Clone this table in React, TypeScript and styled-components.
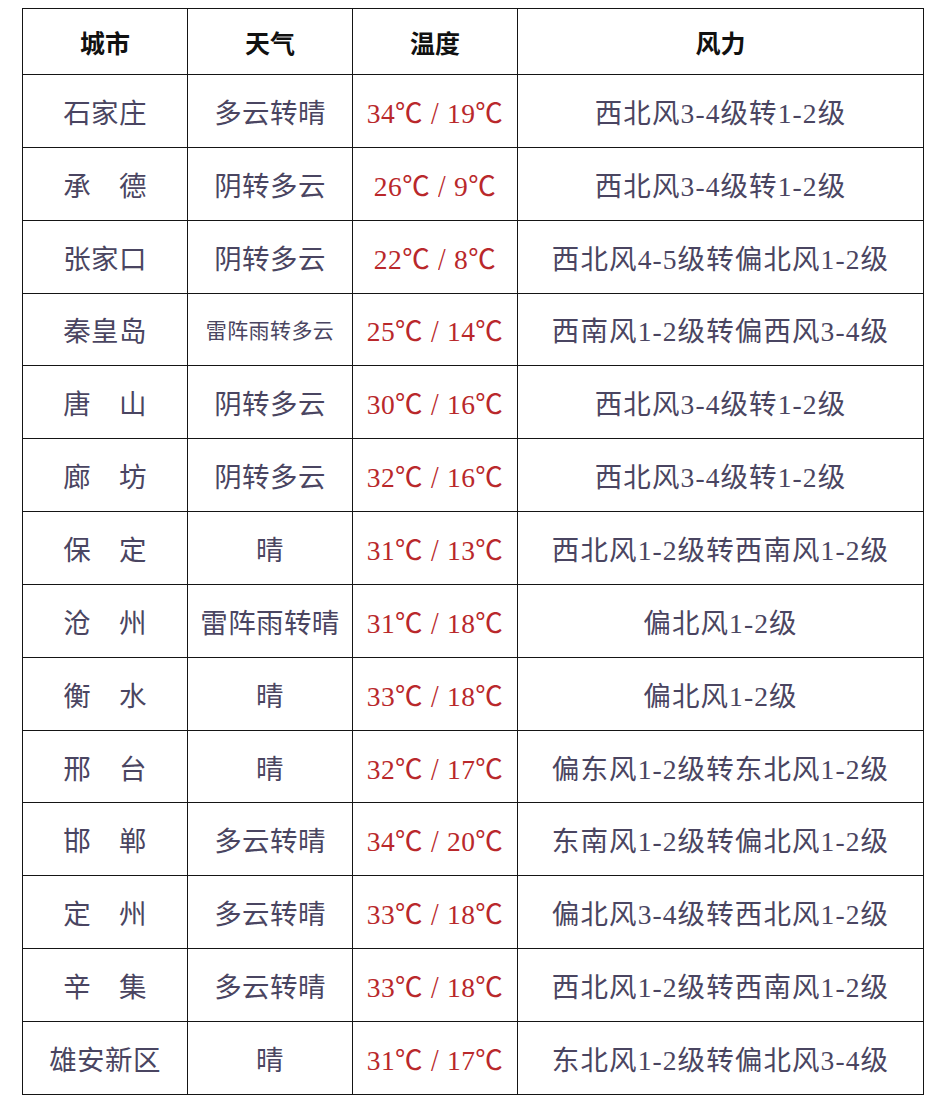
import React from "react";
import styled, { createGlobalStyle } from "styled-components";

const Global = createGlobalStyle`
  html, body { margin: 0; padding: 0; background: #ffffff; }
  body { font-family: "Liberation Serif", "Noto Sans CJK SC", serif; }
`;

const Page = styled.div`
  padding: 8px 0 0 22px;
`;

const Table = styled.table`
  border-collapse: collapse;
  table-layout: fixed;
  width: 901px;
  border: 1.5px solid #151515;
`;

const Col = styled.col<{ $w: number }>`
  width: ${(p) => p.$w}px;
`;

const HeadCell = styled.th`
  height: 65px;
  border: 1.5px solid #151515;
  padding: 0;
  text-align: center;
  vertical-align: middle;
  font-family: "Noto Sans CJK SC", sans-serif;
  font-weight: 700;
  font-size: 25px;
  color: #111111;
`;

const Cell = styled.td<{ $tone?: "red" | "plain"; $small?: boolean; $wide?: boolean }>`
  height: 71.85px;
  border: 1.5px solid #151515;
  padding: 0;
  text-align: center;
  vertical-align: middle;
  white-space: nowrap;
  font-family: "Liberation Serif", "Noto Sans CJK SC", serif;
  font-size: ${(p) => (p.$small ? "21px" : "27.5px")};
  color: ${(p) => (p.$tone === "red" ? "#b9282b" : "#4a4561")};
  letter-spacing: ${(p) => (p.$wide ? "1.1px" : "0.4px")};
`;

const Slash = styled.span`
  display: inline-block;
  margin: 0 8px;
  transform: scaleY(1.12);
`;

type Row = { city: string; weather: string; hi: string; lo: string; wind: string };

const rows: Row[] = [
  { city: "石家庄", weather: "多云转晴", hi: "34", lo: "19", wind: "西北风3-4级转1-2级" },
  { city: "承　德", weather: "阴转多云", hi: "26", lo: "9", wind: "西北风3-4级转1-2级" },
  { city: "张家口", weather: "阴转多云", hi: "22", lo: "8", wind: "西北风4-5级转偏北风1-2级" },
  { city: "秦皇岛", weather: "雷阵雨转多云", hi: "25", lo: "14", wind: "西南风1-2级转偏西风3-4级" },
  { city: "唐　山", weather: "阴转多云", hi: "30", lo: "16", wind: "西北风3-4级转1-2级" },
  { city: "廊　坊", weather: "阴转多云", hi: "32", lo: "16", wind: "西北风3-4级转1-2级" },
  { city: "保　定", weather: "晴", hi: "31", lo: "13", wind: "西北风1-2级转西南风1-2级" },
  { city: "沧　州", weather: "雷阵雨转晴", hi: "31", lo: "18", wind: "偏北风1-2级" },
  { city: "衡　水", weather: "晴", hi: "33", lo: "18", wind: "偏北风1-2级" },
  { city: "邢　台", weather: "晴", hi: "32", lo: "17", wind: "偏东风1-2级转东北风1-2级" },
  { city: "邯　郸", weather: "多云转晴", hi: "34", lo: "20", wind: "东南风1-2级转偏北风1-2级" },
  { city: "定　州", weather: "多云转晴", hi: "33", lo: "18", wind: "偏北风3-4级转西北风1-2级" },
  { city: "辛　集", weather: "多云转晴", hi: "33", lo: "18", wind: "西北风1-2级转西南风1-2级" },
  { city: "雄安新区", weather: "晴", hi: "31", lo: "17", wind: "东北风1-2级转偏北风3-4级" },
];

export default function App() {
  return (
    <>
      <Global />
      <Page>
        <Table>
          <colgroup>
            <Col $w={165} />
            <Col $w={165} />
            <Col $w={165} />
            <Col $w={406} />
          </colgroup>
          <thead>
            <tr>
              <HeadCell>城市</HeadCell>
              <HeadCell>天气</HeadCell>
              <HeadCell>温度</HeadCell>
              <HeadCell>风力</HeadCell>
            </tr>
          </thead>
          <tbody>
            {rows.map((r) => (
              <tr key={r.city}>
                <Cell>{r.city}</Cell>
                <Cell $small={r.weather.length > 5}>{r.weather}</Cell>
                <Cell $tone="red">
                  {r.hi}℃<Slash>/</Slash>
                  {r.lo}℃
                </Cell>
                <Cell $wide>{r.wind}</Cell>
              </tr>
            ))}
          </tbody>
        </Table>
      </Page>
    </>
  );
}
